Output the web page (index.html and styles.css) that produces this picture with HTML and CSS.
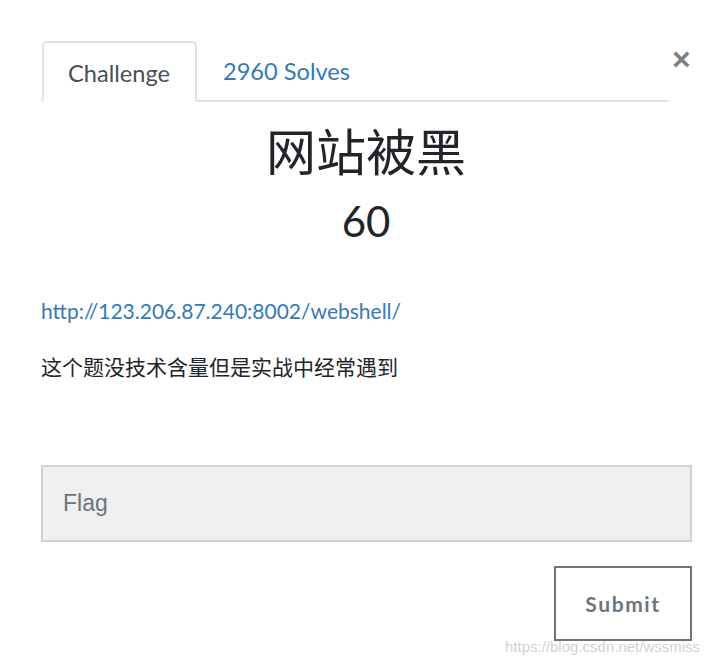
FILE: index.html
```html
<!DOCTYPE html>
<html lang="zh-CN">
<head>
    <meta charset="UTF-8">
    <meta name="viewport" content="width=device-width, initial-scale=1.0">
    <title>网站被黑</title>
    <link rel="stylesheet" href="styles.css">
</head>
<body>
    <div class="modal">
        <div class="modal-head">
            <ul class="tabs">
                <li class="tab active">Challenge</li>
                <li class="tab"><a href="#">2960 Solves</a></li>
            </ul>
            <button class="close">&times;</button>
        </div>

        <h2 class="title">网站被黑</h2>
        <h3 class="value">60</h3>

        <p class="desc"><a href="#">http://123.206.87.240:8002/webshell/</a></p>
        <p class="desc cn">这个题没技术含量但是实战中经常遇到</p>

        <form class="answer">
            <input type="text" placeholder="Flag">
            <div class="actions">
                <button type="button" class="submit">Submit</button>
            </div>
        </form>
    </div>
    <div class="watermark">https://blog.csdn.net/wssmiss</div>
</body>
</html>
```

FILE: styles.css
```css
/* Reset */
* {
    margin: 0;
    padding: 0;
    box-sizing: border-box;
}

body {
    font-family: 'Lato', 'Noto Sans CJK SC', sans-serif;
    background: #fff;
    color: #212529;
    width: 720px;
    height: 664px;
    overflow: hidden;
    position: relative;
}

a {
    color: #337ab7;
    text-decoration: none;
}

/* Modal body */
.modal {
    padding: 41px 29px 0 41px;
}

/* Tabs row */
.modal-head {
    display: flex;
    align-items: flex-start;
}

.tabs {
    list-style: none;
    display: flex;
    flex: 1;
    border-bottom: 2px solid #dee2e6;
    padding-left: 1px;
}

.tab {
    font-size: 23.6px;
    height: 61px;
    line-height: 61px;
    padding: 0 26px;
    margin-bottom: -2px;
}

.tab.active {
    color: #495057;
    border: 2px solid #dee2e6;
    border-bottom-color: #fff;
    border-top-left-radius: 5px;
    border-top-right-radius: 5px;
    background: #fff;
    width: 155px;
    padding: 0 0 0 24px;
    line-height: 60px;
}

.close {
    border: none;
    background: none;
    font-family: 'Liberation Sans', sans-serif;
    font-size: 32px;
    font-weight: bold;
    color: #808080;
    line-height: 1;
    margin: 2px 1px 0 3px;
    width: 18px;
}

/* Title */
.title {
    text-align: center;
    font-weight: normal;
    font-size: 50px;
    line-height: 58px;
    margin-top: 18px;
    font-family: 'Noto Sans CJK SC', sans-serif;
}

.value {
    text-align: center;
    font-weight: normal;
    font-size: 42px;
    line-height: 46px;
    margin-top: 20px;
}

/* Description */
.desc {
    font-size: 21px;
    line-height: 28px;
    margin-top: 53px;
}

.desc.cn {
    font-size: 21px;
    margin-top: 28px;
    color: #212529;
}

/* Flag input */
.answer {
    margin-top: 84px;
    width: 651px;
}

.answer input {
    width: 100%;
    height: 77px;
    background: #efefef;
    border: 2px solid #ced2d8;
    padding: 0 20px;
    font-family: 'Liberation Sans', sans-serif;
    font-size: 23px;
    color: #495057;
    outline: none;
}

.answer input::placeholder {
    color: #6c757d;
}

.actions {
    display: flex;
    justify-content: flex-end;
    margin-top: 24px;
}

.submit {
    width: 138px;
    height: 75px;
    background: #fff;
    border: 2px solid #6c757d;
    font-family: 'Lato', sans-serif;
    font-weight: bold;
    font-size: 21px;
    letter-spacing: 1.6px;
    color: #6c757d;
    cursor: pointer;
}

/* Watermark over the corner */
.watermark {
    position: absolute;
    left: 505px;
    top: 638px;
    font-family: 'Liberation Sans', sans-serif;
    font-size: 15px;
    color: rgba(200, 200, 200, 0.85);
}
```
